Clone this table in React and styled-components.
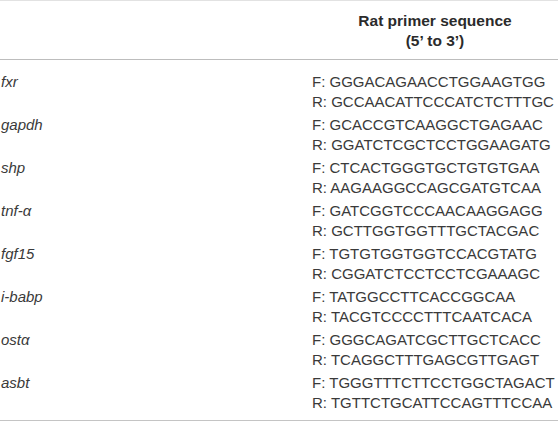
import styled, { createGlobalStyle } from "styled-components";

const GlobalStyle = createGlobalStyle`
	body {
		margin: 0;
		background: #fff;
		font-family: "Liberation Sans", Arial, sans-serif;
		color: #333;
	}
`;

const Table = styled.div`
	width: 558px;
	border-top: 1px solid #e2e2e2;
	border-bottom: 1px solid #c4c4c4;
`;

const Head = styled.div`
	display: grid;
	grid-template-columns: 312px 1fr;
	height: 59px;
	border-bottom: 1px solid #bdbdbd;
	padding-top: 10px;
	box-sizing: border-box;
`;

const HeadCell = styled.div`
	grid-column: 2;
	text-align: center;
	font-weight: bold;
	font-size: 15.5px;
	line-height: 20px;
	color: #2b2b2b;
`;

const Body = styled.div`
	padding: 10px 0 6px;
`;

const Row = styled.div`
	display: grid;
	grid-template-columns: 312px 1fr;
	padding: 1.5px 0;
	height: 43px;
	box-sizing: border-box;
	font-size: 15px;
	line-height: 20px;
`;

const Gene = styled.div`
	font-style: italic;
	padding-left: 1px;
	color: #3a3a3a;
`;

const Seq = styled.div`
	white-space: nowrap;
	color: #3a3a3a;
`;

const primers = [
	["fxr", "GGGACAGAACCTGGAAGTGG", "GCCAACATTCCCATCTCTTTGC"],
	["gapdh", "GCACCGTCAAGGCTGAGAAC", "GGATCTCGCTCCTGGAAGATG"],
	["shp", "CTCACTGGGTGCTGTGTGAA", "AAGAAGGCCAGCGATGTCAA"],
	["tnf-α", "GATCGGTCCCAACAAGGAGG", "GCTTGGTGGTTTGCTACGAC"],
	["fgf15", "TGTGTGGTGGTCCACGTATG", "CGGATCTCCTCCTCGAAAGC"],
	["i-babp", "TATGGCCTTCACCGGCAA", "TACGTCCCCTTTCAATCACA"],
	["ostα", "GGGCAGATCGCTTGCTCACC", "TCAGGCTTTGAGCGTTGAGT"],
	["asbt", "TGGGTTTCTTCCTGGCTAGACT", "TGTTCTGCATTCCAGTTTCCAA"],
];

function App() {
	return (
		<>
			<GlobalStyle />
			<Table>
				<Head>
					<HeadCell>
						Rat primer sequence
						<br />
						(5’ to 3’)
					</HeadCell>
				</Head>
				<Body>
					{primers.map(([gene, f, r]) => (
						<Row key={gene}>
							<Gene>{gene}</Gene>
							<Seq>
								F: {f}
								<br />
								R: {r}
							</Seq>
						</Row>
					))}
				</Body>
			</Table>
		</>
	);
}

export default App;
